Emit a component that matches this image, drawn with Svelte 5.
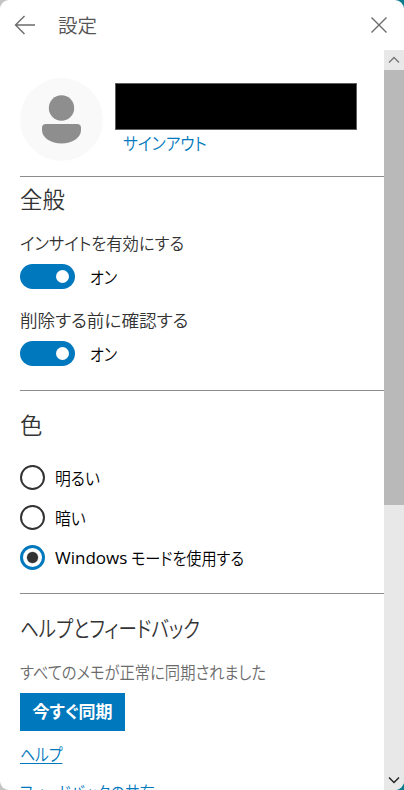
<script lang="ts">
  let toggles = $state([
    { id: 'insights', label: 'インサイトを有効にする', on: true },
    { id: 'confirm', label: '削除する前に確認する', on: true },
  ]);

  const themes = [
    { value: 'light', prefix: '', label: '明るい' },
    { value: 'dark', prefix: '', label: '暗い' },
    { value: 'system', prefix: 'Windows', label: 'モードを使用する' },
  ];

  let theme = $state('system');
</script>

<div class="window">
  <header class="titlebar">
    <button class="icon-btn" aria-label="戻る">
      <svg width="22" height="20" viewBox="0 0 22 20">
        <path d="M21 10H1.5M10.5 1L1.5 10l9 9" />
      </svg>
    </button>
    <h1>設定</h1>
    <button class="icon-btn close" aria-label="閉じる">
      <svg width="16" height="16" viewBox="0 0 16 16">
        <path d="M.5.5l15 15M15.5.5l-15 15" />
      </svg>
    </button>
  </header>

  <div class="body">
    <main>
      <section class="profile">
        <svg class="avatar" width="83" height="83" viewBox="0 0 83 83">
          <circle class="disc" cx="41.5" cy="41.5" r="41.5" />
          <circle cx="41.5" cy="30" r="12.7" />
          <path d="M26 46h31a4 4 0 0 1 4 4v2c0 8-9 13.500-19.500 13.500S22 60 22 52v-2a4 4 0 0 1 4-4z" />
        </svg>
        <div class="account">
          <div class="name"></div>
          <a class="signout" href="#signout">サインアウト</a>
        </div>
      </section>

      <section class="general">
        <h2>全般</h2>
        {#each toggles as item (item.id)}
          <div class="setting">
            <div class="label {item.id}">{item.label}</div>
            <button class="toggle" role="switch" aria-checked={item.on} aria-label={item.label} onclick={() => (item.on = !item.on)}>
              <span class="track" class:on={item.on}><span class="thumb"></span></span>
              <span class="state">{item.on ? 'オン' : 'オフ'}</span>
            </button>
          </div>
        {/each}
      </section>

      <section class="color">
        <h2>色</h2>
        {#each themes as t}
          <label class="radio">
            <input type="radio" name="theme" value={t.value} bind:group={theme} />
            {#if t.prefix}<span class="prefix">{t.prefix}</span>{/if}
            <span class="text {t.value}">{t.label}</span>
          </label>
        {/each}
      </section>

      <section class="help">
        <h2>ヘルプとフィードバック</h2>
        <p>すべてのメモが正常に同期されました</p>
        <button class="sync">今すぐ同期</button>
        <a class="link" href="#help">ヘルプ</a>
        <a class="link feedback" href="#feedback">フィードバックの共有</a>
      </section>
    </main>

    <div class="scrollbar">
      <div class="arrow">
        <svg width="12" height="8" viewBox="0 0 12 8"><path d="M1 6.500l5-5 5 5" /></svg>
      </div>
      <div class="scroll-thumb"></div>
      <div class="arrow down">
        <svg width="12" height="8" viewBox="0 0 12 8"><path d="M1 1.500l5 5 5-5" /></svg>
      </div>
    </div>
  </div>
</div>

<style>
  :global(body) {
    background: linear-gradient(90deg, #c4c4c4 50%, #0b7c8c 50%);
  }

  .window {
    display: flex;
    flex-direction: column;
    height: 790px;
    overflow: hidden;
    border-radius: 9px;
    background: #fff;
    color: #000;
    font-family: "Open Sans", "Noto Sans CJK JP", sans-serif;
    font-size: 17.600px;
    font-weight: 350;
    font-feature-settings: "palt";
    line-height: 24px;
  }

  button {
    padding: 0;
    border: none;
    background: none;
    color: inherit;
    font: inherit;
    font-feature-settings: inherit;
    cursor: pointer;
  }

  h1, h2, p {
    margin: 0;
    font-weight: 350;
    white-space: nowrap;
  }

  .titlebar {
    flex: none;
    display: flex;
    align-items: center;
    height: 50px;
    padding: 0 17px 0 14px;
  }

  .titlebar h1 {
    margin-left: 22px;
    padding-top: 2px;
    color: #555;
    font-size: 19.500px;
  }

  .icon-btn {
    display: flex;
  }

  .icon-btn path {
    fill: none;
    stroke: #6b6b6b;
    stroke-width: 1.4;
  }

  .close {
    margin-left: auto;
  }

  .body {
    flex: 1;
    min-height: 0;
    display: flex;
  }

  main {
    flex: 1;
    min-width: 0;
    overflow: hidden;
    padding-left: 20px;
  }

  .profile {
    display: flex;
    height: 98px;
    padding-top: 28px;
  }

  .avatar {
    fill: #8e8e8e;
  }

  .disc {
    fill: #f9f9f9;
  }

  .account {
    padding: 5px 0 0 12px;
  }

  .name {
    box-sizing: border-box;
    width: 242px;
    height: 47px;
    margin-bottom: 1px;
    border: 1px solid #5f5f5f;
    background: #000;
  }

  .signout, .label, .state, .text, .help h2, .help p, .link {
    width: max-content;
    transform-origin: left center;
  }

  .signout {
    display: block;
    margin-left: 8px;
    color: #0078bd;
    text-decoration: none;
    transform: scaleX(0.895);
  }

  .general, .color, .help {
    border-top: 1px solid #8c8c8c;
  }

  h2 {
    color: #333;
    font-size: 22.400px;
    line-height: 30px;
  }

  .general {
    height: 205px;
    padding-top: 8px;
  }

  .setting {
    height: 61px;
    padding-top: 16px;
  }

  .label {
    margin-bottom: 9px;
    color: #333;
    white-space: nowrap;
  }

  .insights {
    transform: scaleX(0.927);
  }

  .toggle {
    display: flex;
    align-items: center;
    height: 25px;
  }

  .track {
    box-sizing: border-box;
    width: 55px;
    height: 25px;
    padding: 6px;
    border-radius: 13px;
    background: #767676;
  }

  .track.on {
    padding-left: 36px;
    background: #0078bd;
  }

  .thumb {
    display: block;
    width: 13px;
    height: 13px;
    border-radius: 50%;
    background: #fff;
  }

  .state {
    margin-left: 15px;
    transform: scaleX(0.85);
  }

  .color {
    height: 182px;
    padding-top: 20px;
  }

  .color h2 {
    margin-bottom: 16px;
  }

  .radio {
    display: flex;
    align-items: center;
    height: 40px;
    white-space: nowrap;
  }

  .text, .prefix {
    padding-top: 2px;
  }

  .text {
    transform: scaleX(0.9);
  }

  .text.system {
    transform: scaleX(0.862);
  }

  .prefix {
    margin-right: 4px;
    font-size: 17px;
    font-weight: 400;
  }

  .radio input {
    appearance: none;
    box-sizing: border-box;
    width: 25px;
    height: 25px;
    margin: 0 10px 0 0;
    border: 2.500px solid #333;
    border-radius: 50%;
  }

  .radio input:checked {
    border: 3px solid #0078bd;
    background: radial-gradient(circle, #333 5px, #fff 6.200px);
  }

  .help {
    padding-top: 20px;
  }

  .help h2 {
    transform: scaleX(0.825);
  }

  .help p {
    margin: 16px 0 9px;
    color: #6b6b6b;
    transform: scaleX(0.87);
  }

  .sync {
    display: block;
    width: 105px;
    height: 38px;
    margin-bottom: 11px;
    background: #0078bd;
    color: #fff;
    font-size: 17px;
    font-weight: 700;
  }

  .link {
    display: block;
    margin-bottom: 14px;
    color: #0078bd;
    text-decoration-thickness: 1px;
    text-underline-offset: 2px;
    transform: scaleX(0.84);
  }

  .feedback {
    transform: scaleX(0.855);
  }

  .scrollbar {
    flex: none;
    display: flex;
    flex-direction: column;
    width: 20px;
    background: #e8e8e8;
  }

  .arrow {
    display: flex;
    align-items: center;
    justify-content: center;
    height: 20px;
  }

  .arrow path {
    fill: none;
    stroke: #777;
    stroke-width: 1.4;
  }

  .down {
    margin-top: auto;
  }

  .down path {
    stroke: #222;
  }

  .scroll-thumb {
    height: 435px;
    background: #b9b9b9;
  }
</style>
